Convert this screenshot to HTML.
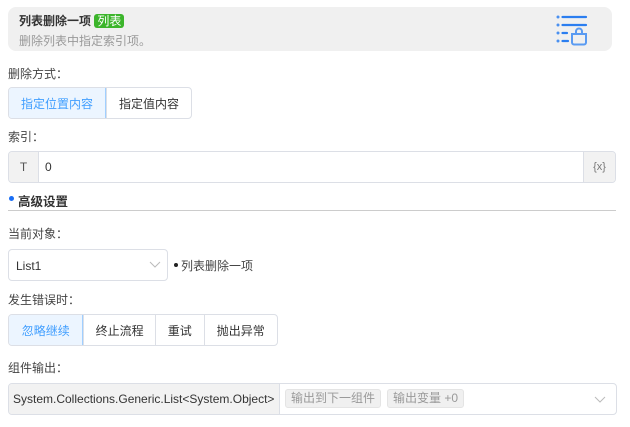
<!DOCTYPE html>
<html><head><meta charset="utf-8"><style>
*{box-sizing:border-box;margin:0;padding:0}
body{width:630px;height:427px;background:#fff;font-family:"Liberation Sans","Noto Sans CJK SC",sans-serif;font-size:12px;color:#333;position:relative;overflow:hidden}
.abs{position:absolute}
.hdr{left:8px;top:7px;width:604px;height:44px;background:#f0f0f0;border-radius:8px}
.lbl{position:absolute;left:8px;font-size:12px;color:#444}
.btns{position:absolute;display:flex;border:1px solid #dcdfe6;border-radius:4px;overflow:hidden;height:32px}
.btns div{display:flex;align-items:center;justify-content:center;border-left:1px solid #dcdfe6;color:#333;font-size:12px}
.btns div:first-child{border-left:none;background:#ecf5ff;color:#409eff;border-right:1px solid #a0cfff}
</style></head><body>
<div class="abs hdr"></div>
<div class="abs" style="left:19px;top:12px;font-size:12px;font-weight:bold;color:#333">列表删除一项 <span style="background:#3cb52b;color:#fff;font-weight:normal;border-radius:3px;padding:0 3px;font-size:12px">列表</span></div>
<div class="abs" style="left:19px;top:32px;font-size:12px;color:#999">删除列表中指定索引项。</div>
<svg class="abs" style="left:555px;top:14px" width="34" height="34" viewBox="0 0 34 34">
<g fill="#4a90f0"><circle cx="3" cy="3" r="1.5"/><circle cx="3" cy="11" r="1.5"/><circle cx="3" cy="19" r="1.5"/><circle cx="3" cy="27" r="1.5"/></g>
<g stroke="#2b7ef0" stroke-width="2.2" stroke-linecap="round"><line x1="7.5" y1="3" x2="31" y2="3"/><line x1="7.5" y1="11" x2="31" y2="11"/><line x1="7.5" y1="19" x2="12" y2="19"/><line x1="7.5" y1="27" x2="13" y2="27"/></g>
<path d="M17 20h14v8.5a2 2 0 0 1-2 2h-10a2 2 0 0 1-2-2z M21 20v-2.5a3 3 0 0 1 6 0V20" fill="none" stroke="#5a9bf2" stroke-width="2"/>
</svg>
<div class="lbl" style="top:65px">删除方式：</div>
<div class="btns" style="left:8px;top:87px;width:184px">
<div style="width:98px">指定位置内容</div><div style="width:86px">指定值内容</div></div>
<div class="lbl" style="top:128px">索引：</div>
<div class="abs" style="left:8px;top:151px;width:608px;height:32px;border:1px solid #dcdfe6;border-radius:4px;overflow:hidden">
<div class="abs" style="left:0;top:0;width:30px;height:30px;background:#f2f2f2;border-right:1px solid #dcdfe6;display:flex;align-items:center;justify-content:center;color:#555">T</div>
<div class="abs" style="left:36px;top:8px;color:#333">0</div>
<div class="abs" style="right:0;top:0;width:32px;height:30px;background:#f2f2f2;border-left:1px solid #dcdfe6;display:flex;align-items:center;justify-content:center;color:#777;font-size:11px">{x}</div>
</div>
<div class="abs" style="left:9px;top:196px;width:5px;height:5px;border-radius:50%;background:#1a6ef5"></div>
<div class="abs" style="left:18px;top:191px;font-weight:bold;color:#333;font-size:12.5px">高级设置</div>
<div class="abs" style="left:8px;top:210px;width:608px;height:1px;background:#ccc"></div>
<div class="lbl" style="top:225px">当前对象：</div>
<div class="abs" style="left:8px;top:249px;width:160px;height:32px;border:1px solid #dcdfe6;border-radius:4px">
<div class="abs" style="left:7px;top:9px;color:#333">List1</div>
<svg class="abs" style="left:140px;top:11px" width="12" height="8"><path d="M1 1l5 5 5-5" fill="none" stroke="#bbb" stroke-width="1"/></svg></div>
<div class="abs" style="left:174px;top:263px;width:4px;height:4px;border-radius:50%;background:#222"></div>
<div class="abs" style="left:181px;top:257px;color:#444">列表删除一项</div>
<div class="lbl" style="top:291px">发生错误时：</div>
<div class="btns" style="left:8px;top:314px;width:270px">
<div style="width:75px">忽略继续</div><div style="width:72px">终止流程</div><div style="width:49px">重试</div><div style="width:74px">抛出异常</div></div>
<div class="lbl" style="top:359px">组件输出：</div>
<div class="abs" style="left:8px;top:383px;width:609px;height:32px;border:1px solid #dcdfe6;border-radius:4px;overflow:hidden">
<div class="abs" style="left:0;top:0;width:271px;height:30px;background:#f2f2f2;border-right:1px solid #dcdfe6;display:flex;align-items:center;padding-left:4px;color:#333;font-size:12px;white-space:nowrap">System.Collections.Generic.List&lt;System.Object&gt;</div>
<div class="abs" style="left:276px;top:5px;height:19px;padding:0 5px;background:#f0f0f0;border:1px solid #e4e4e4;border-radius:3px;color:#999;line-height:17px">输出到下一组件</div>
<div class="abs" style="left:378px;top:5px;height:19px;padding:0 5px;background:#f0f0f0;border:1px solid #e4e4e4;border-radius:3px;color:#999;line-height:17px">输出变量 +0</div>
<svg class="abs" style="left:585px;top:12px" width="12" height="8"><path d="M1 1l5 5 5-5" fill="none" stroke="#bbb" stroke-width="1"/></svg></div>
</body></html>
